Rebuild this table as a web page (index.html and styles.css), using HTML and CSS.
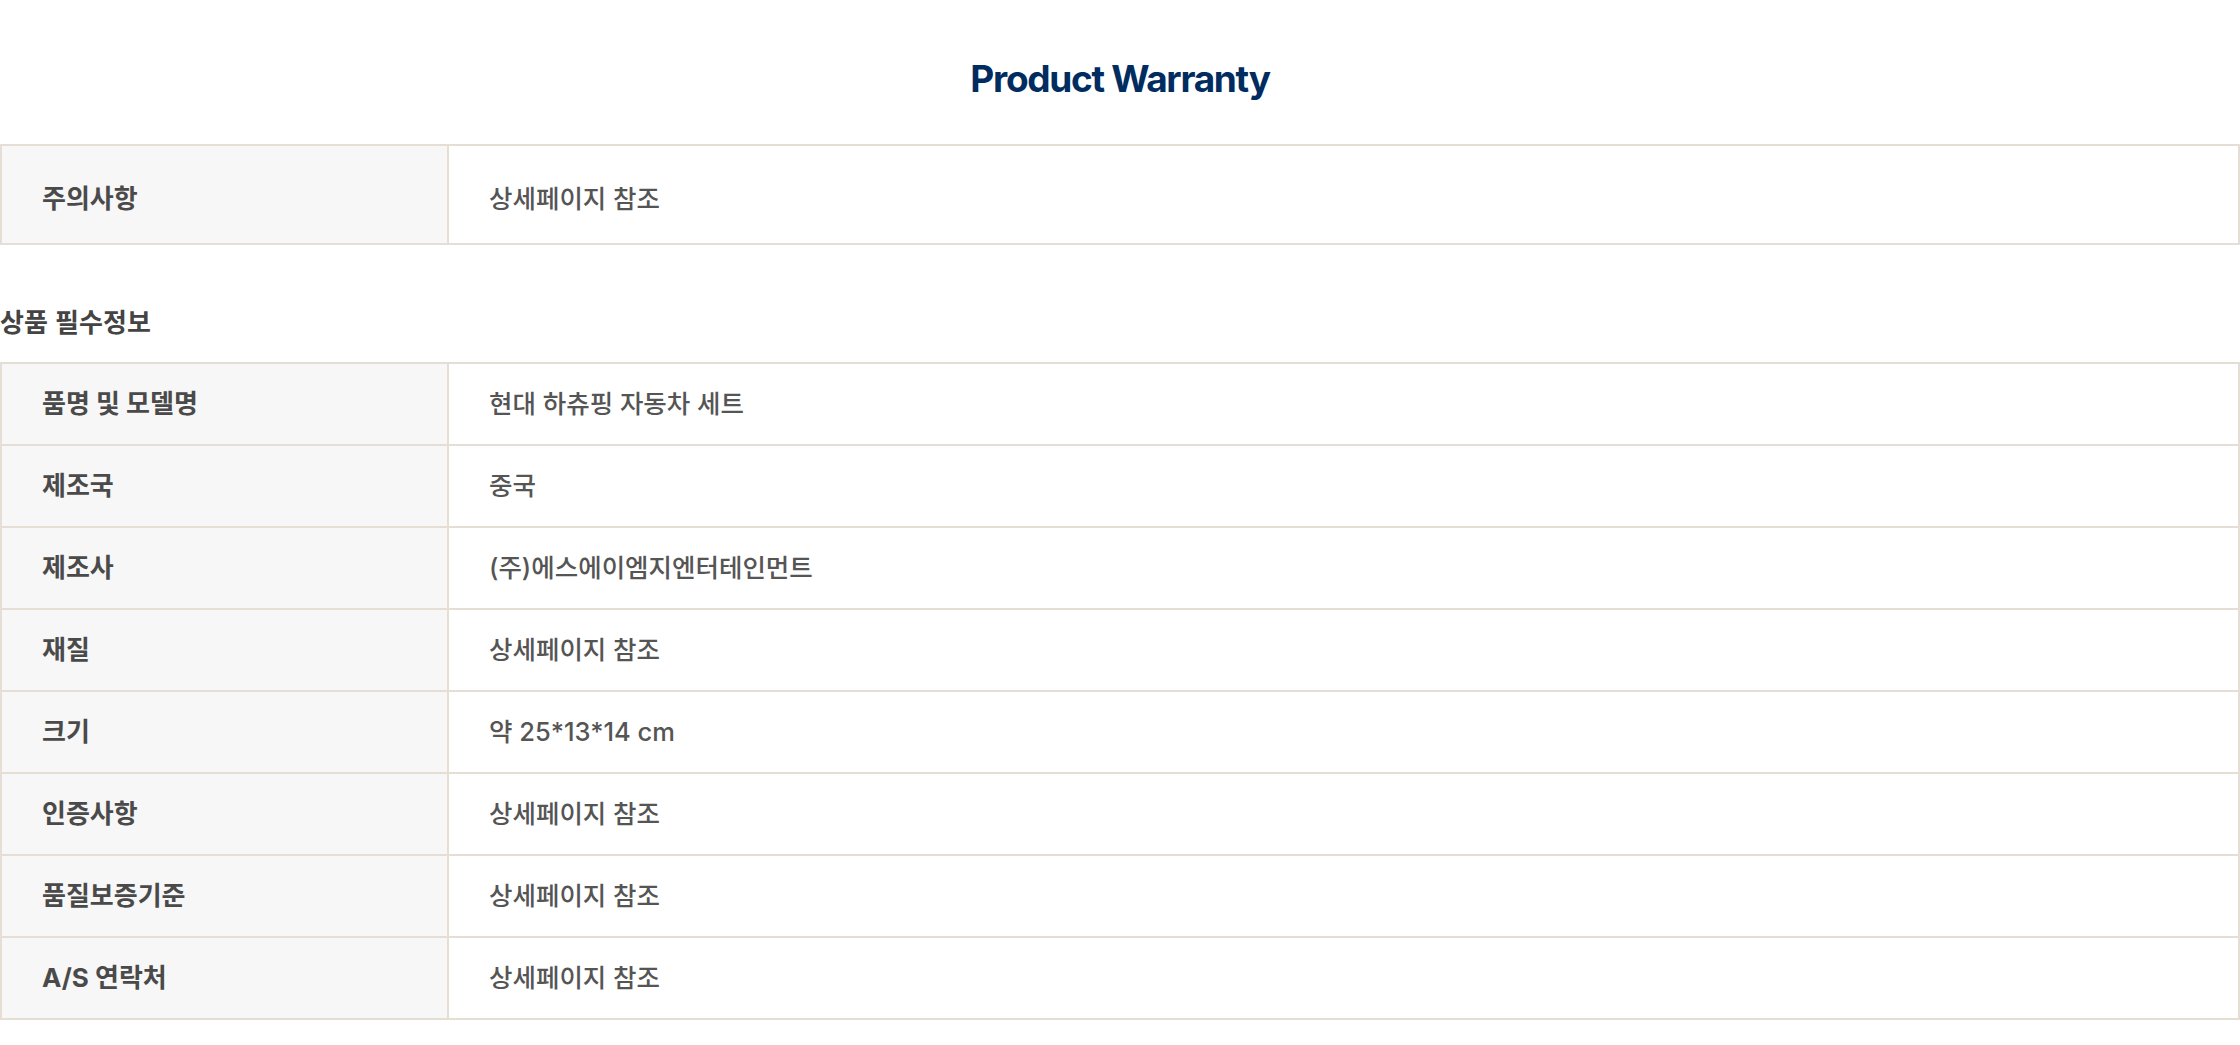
FILE: index.html
```html
<!DOCTYPE html>
<html lang="ko">
<head>
<meta charset="utf-8">
<title>Product Warranty</title>
<link rel="stylesheet" href="styles.css">
</head>
<body>
<main class="page">
  <h1 class="title">Product Warranty</h1>

  <div class="spec spec-notice">
    <div class="cell label">주의사항</div>
    <div class="cell value">상세페이지 참조</div>
  </div>

  <h2 class="section-title">상품 필수정보</h2>

  <div class="spec spec-info">
    <div class="cell label">품명 및 모델명</div>
    <div class="cell value">현대 하츄핑 자동차 세트</div>
    <div class="cell label">제조국</div>
    <div class="cell value">중국</div>
    <div class="cell label">제조사</div>
    <div class="cell value">(주)에스에이엠지엔터테인먼트</div>
    <div class="cell label">재질</div>
    <div class="cell value">상세페이지 참조</div>
    <div class="cell label">크기</div>
    <div class="cell value">약 25*13*14 cm</div>
    <div class="cell label">인증사항</div>
    <div class="cell value">상세페이지 참조</div>
    <div class="cell label">품질보증기준</div>
    <div class="cell value">상세페이지 참조</div>
    <div class="cell label">A/S 연락처</div>
    <div class="cell value">상세페이지 참조</div>
  </div>
</main>
</body>
</html>
```

FILE: styles.css
```css
html, body {
  margin: 0;
  padding: 0;
  background: #ffffff;
}

.page {
  display: flex;
  flex-direction: column;
  font-family: Inter, "Noto Sans CJK KR", sans-serif;
}

.title {
  margin: 0;
  padding-top: 56px;
  height: 46px;
  margin-bottom: 42px;
  font-family: Inter, sans-serif;
  font-size: 37px;
  line-height: 46px;
  font-weight: 700;
  letter-spacing: -1.3px;
  color: #002c5f;
  text-align: center;
}

.spec {
  display: grid;
  grid-template-columns: 447px 1fr;
  border: 2px solid #e6ded5;
}

.cell {
  display: flex;
  align-items: center;
  box-sizing: border-box;
  height: 80px;
  padding-left: 40px;
  font-size: 25.5px;
  line-height: 34px;
}

.cell:nth-child(n+3) {
  height: 82px;
  border-top: 2px solid #e6ded5;
}

.spec-notice .cell {
  height: 97px;
  padding-top: 9px;
}

.label {
  background: #f7f7f7;
  border-right: 2px solid #e6ded5;
  font-size: 26px;
  font-weight: 700;
  color: #4a4a4a;
}

.value {
  font-weight: 500;
  color: #555555;
}

.section-title {
  margin: 59px 0 24px;
  height: 34px;
  font-family: "Noto Sans CJK KR", sans-serif;
  font-size: 26px;
  line-height: 34px;
  font-weight: 700;
  color: #444444;
}
```
